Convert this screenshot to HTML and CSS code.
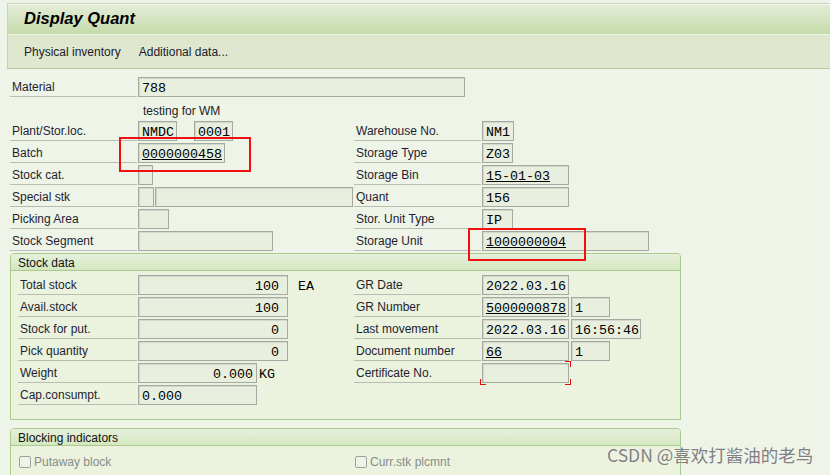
FILE: index.html
```html
<!DOCTYPE html>
<html>
<head>
<meta charset="utf-8">
<link rel="stylesheet" href="styles.css">
</head>
<body>
<div class="page">
  <header class="titlebar"><h1>Display Quant</h1></header>
  <nav class="toolbar"><span class="tb-item">Physical inventory</span><span class="tb-item">Additional data...</span></nav>
  <main class="content">
    <div class="row"><span class="lbl">Material</span><span class="f w327">788</span></div>
    <div class="row"><span class="desc">testing for WM</span></div>
    <div class="cols">
      <div class="col-l">
        <div class="row"><span class="lbl">Plant/Stor.loc.</span><span class="f w39">NMDC</span><span class="f w39 ml17">0001</span></div>
        <div class="row"><span class="lbl">Batch</span><span class="f w87 link">0000000458</span></div>
        <div class="row"><span class="lbl">Stock cat.</span><span class="f w15"></span></div>
        <div class="row"><span class="lbl">Special stk</span><span class="f w16"></span><span class="f w198 ml1"></span></div>
        <div class="row"><span class="lbl">Picking Area</span><span class="f w31"></span></div>
        <div class="row"><span class="lbl">Stock Segment</span><span class="f w135"></span></div>
      </div>
      <div class="col-r">
        <div class="row"><span class="lbl">Warehouse No.</span><span class="f w32">NM1</span></div>
        <div class="row"><span class="lbl">Storage Type</span><span class="f w31">Z03</span></div>
        <div class="row"><span class="lbl">Storage Bin</span><span class="f w87 link">15-01-03</span></div>
        <div class="row"><span class="lbl">Quant</span><span class="f w87">156</span></div>
        <div class="row"><span class="lbl">Stor. Unit Type</span><span class="f w31">IP</span></div>
        <div class="row"><span class="lbl">Storage Unit</span><span class="f w167 link">1000000004</span></div>
      </div>
    </div>

    <section class="group stock">
      <div class="group-head">Stock data</div>
      <div class="group-body cols">
        <div class="col-l in">
          <div class="row"><span class="lbl">Total stock</span><span class="f w150 num">100</span><span class="unit ml10">EA</span></div>
          <div class="row"><span class="lbl">Avail.stock</span><span class="f w150 num">100</span></div>
          <div class="row"><span class="lbl">Stock for put.</span><span class="f w150 num">0</span></div>
          <div class="row"><span class="lbl">Pick quantity</span><span class="f w150 num">0</span></div>
          <div class="row"><span class="lbl">Weight</span><span class="f w119 num tight">0.000</span><span class="unit ml2">KG</span></div>
          <div class="row"><span class="lbl">Cap.consumpt.</span><span class="f w119">0.000</span></div>
        </div>
        <div class="col-r">
          <div class="row"><span class="lbl">GR Date</span><span class="f w87">2022.03.16</span></div>
          <div class="row"><span class="lbl">GR Number</span><span class="f w87 link">5000000878</span><span class="f w39 ml2">1</span></div>
          <div class="row"><span class="lbl">Last movement</span><span class="f w87">2022.03.16</span><span class="f w70 ml2">16:56:46</span></div>
          <div class="row"><span class="lbl">Document number</span><span class="f w87 link">66</span><span class="f w39 ml2">1</span></div>
          <div class="row"><span class="lbl">Certificate No.</span><span class="req"><span class="f w87"></span><span class="cn tr"></span><span class="cn bl"></span><span class="cn br"></span></span></div>
        </div>
      </div>
    </section>

    <section class="group block">
      <div class="group-head">Blocking indicators</div>
      <div class="group-body cols">
        <div class="col-l in">
          <div class="row"><span class="chk"></span><span class="chk-lbl">Putaway block</span></div>
        </div>
        <div class="col-r">
          <div class="row"><span class="chk"></span><span class="chk-lbl">Curr.stk plcmnt</span></div>
        </div>
      </div>
    </section>
  </main>

  <div class="mark mark-batch"></div>
  <div class="mark mark-su"></div>
  <div class="watermark">CSDN @喜欢打酱油的老鸟</div>
</div>
</body>
</html>
```

FILE: styles.css
```css
html, body {
  margin: 0;
  padding: 0;
}
body {
  background: #eff4e9;
  font-family: "Liberation Sans", Arial, sans-serif;
  font-size: 12px;
  color: #1e1e30;
}
.page {
  position: relative;
  width: 830px;
  height: 475px;
  overflow: hidden;
  background: #eff4e9;
}
.titlebar {
  margin: 3px 0 0 7px;
  height: 31px;
  box-sizing: border-box;
  border-top: 1px solid #c8d6b9;
  border-left: 1px solid #c9d8b8;
  box-shadow: inset 0 1px 0 #f3f7ee;
  background: linear-gradient(#e4edd9, #c5dbaa);
}
.titlebar h1 {
  margin: 0;
  padding-left: 16px;
  font-size: 16.5px;
  font-weight: bold;
  font-style: italic;
  line-height: 29px;
  color: #000;
}
.toolbar {
  margin-left: 7px;
  height: 35px;
  box-sizing: border-box;
  border-top: 1px solid #eef3e7;
  border-left: 1px solid #c3d2b2;
  border-bottom: 1px solid #b3c89c;
  background: #dfe7cf;
  display: flex;
  align-items: center;
  gap: 18px;
  padding: 1px 0 0 16px;
  color: #1b1b2b;
}
.content {
  padding: 7px 0 0 10px;
}
.row {
  display: flex;
  align-items: flex-start;
  height: 22px;
}
.lbl {
  width: 127px;
  height: 21px;
  margin-right: 1px;
  box-sizing: border-box;
  padding: 2px 0 0 2px;
  line-height: 19px;
  border-bottom: 1px solid #b8bdb1;
  white-space: nowrap;
  flex: none;
}
.desc {
  margin-left: 133px;
  padding-top: 2px;
  line-height: 22px;
  color: #222;
}
.cols {
  display: flex;
}
.col-l {
  width: 344px;
  flex: none;
}
.col-l.in {
  width: 336px;
}
.in .lbl {
  width: 119px;
}
.f {
  display: block;
  flex: none;
  height: 20px;
  margin-top: 1px;
  box-sizing: border-box;
  border: 1px solid #a6a9a1;
  box-shadow: inset 1px 1px 0 #d3d7cc;
  background: #e9efdf;
  font-family: "Liberation Mono", "Courier New", monospace;
  font-size: 13.33px;
  line-height: 18px;
  padding: 2px 0 0 3px;
  color: #000;
  white-space: nowrap;
  overflow: hidden;
}
.link {
  text-decoration: underline;
}
.num {
  text-align: right;
  padding: 2px 8px 0 0;
}
.num.tight {
  padding-right: 3px;
}
.unit {
  font-family: "Liberation Mono", "Courier New", monospace;
  font-size: 13.33px;
  line-height: 20px;
  margin-top: 3px;
  color: #000;
}
.ml1 { margin-left: 1px; }
.ml2 { margin-left: 2px; }
.ml10 { margin-left: 10px; }
.ml17 { margin-left: 17px; }
.w15 { width: 15px; }
.w16 { width: 16px; }
.w31 { width: 31px; }
.w32 { width: 32px; }
.w39 { width: 39px; }
.w70 { width: 70px; }
.w87 { width: 87px; }
.w119 { width: 119px; }
.w135 { width: 135px; }
.w150 { width: 150px; }
.w167 { width: 167px; }
.w198 { width: 198px; }
.w327 { width: 327px; }

.req {
  position: relative;
  display: block;
}
.cn {
  position: absolute;
  width: 5px;
  height: 5px;
  border: 0 solid #e01010;
}
.cn.tr {
  top: -1px;
  right: -2px;
  border-top-width: 1px;
  border-right-width: 1px;
}
.cn.bl {
  bottom: -2px;
  left: -2px;
  border-bottom-width: 1px;
  border-left-width: 1px;
}
.cn.br {
  bottom: -2px;
  right: -2px;
  border-bottom-width: 1px;
  border-right-width: 1px;
}

.group {
  width: 671px;
  box-sizing: border-box;
  border: 1px solid #a9ca8c;
  border-radius: 4px 4px 0 0;
  background: #ebf3df;
}
.stock {
  margin-top: 1px;
}
.block {
  margin-top: 8px;
}
.group-head {
  height: 17px;
  box-sizing: border-box;
  border-bottom: 1px solid #a9ca8c;
  border-radius: 3px 3px 0 0;
  background: linear-gradient(#e6f0dc, #d4e7c0);
  padding: 1px 0 0 7px;
  line-height: 16px;
  color: #111;
}
.group-body {
  padding: 3px 0 13px 7px;
}
.block .group-body {
  padding-top: 5px;
}
.chk {
  width: 12px;
  height: 12px;
  margin: 5px 3px 0 1px;
  box-sizing: border-box;
  border: 1px solid #9ea29a;
  border-radius: 2px;
  background: #edf3e5;
  flex: none;
}
.chk-lbl {
  line-height: 22px;
  color: #8a8c88;
}
.mark {
  position: absolute;
  border: 2px solid #f01010;
  box-sizing: border-box;
}
.mark-batch {
  left: 119px;
  top: 137px;
  width: 132px;
  height: 35px;
}
.mark-su {
  left: 468px;
  top: 228px;
  width: 118px;
  height: 33px;
}
.watermark {
  position: absolute;
  left: 607px;
  top: 444px;
  font-family: "Noto Sans CJK SC", "Noto Sans", sans-serif;
  font-size: 17.5px;
  line-height: 22px;
  color: #808080;
  white-space: nowrap;
  text-shadow: 0 0 2px rgba(255,255,255,0.6);
}
```
